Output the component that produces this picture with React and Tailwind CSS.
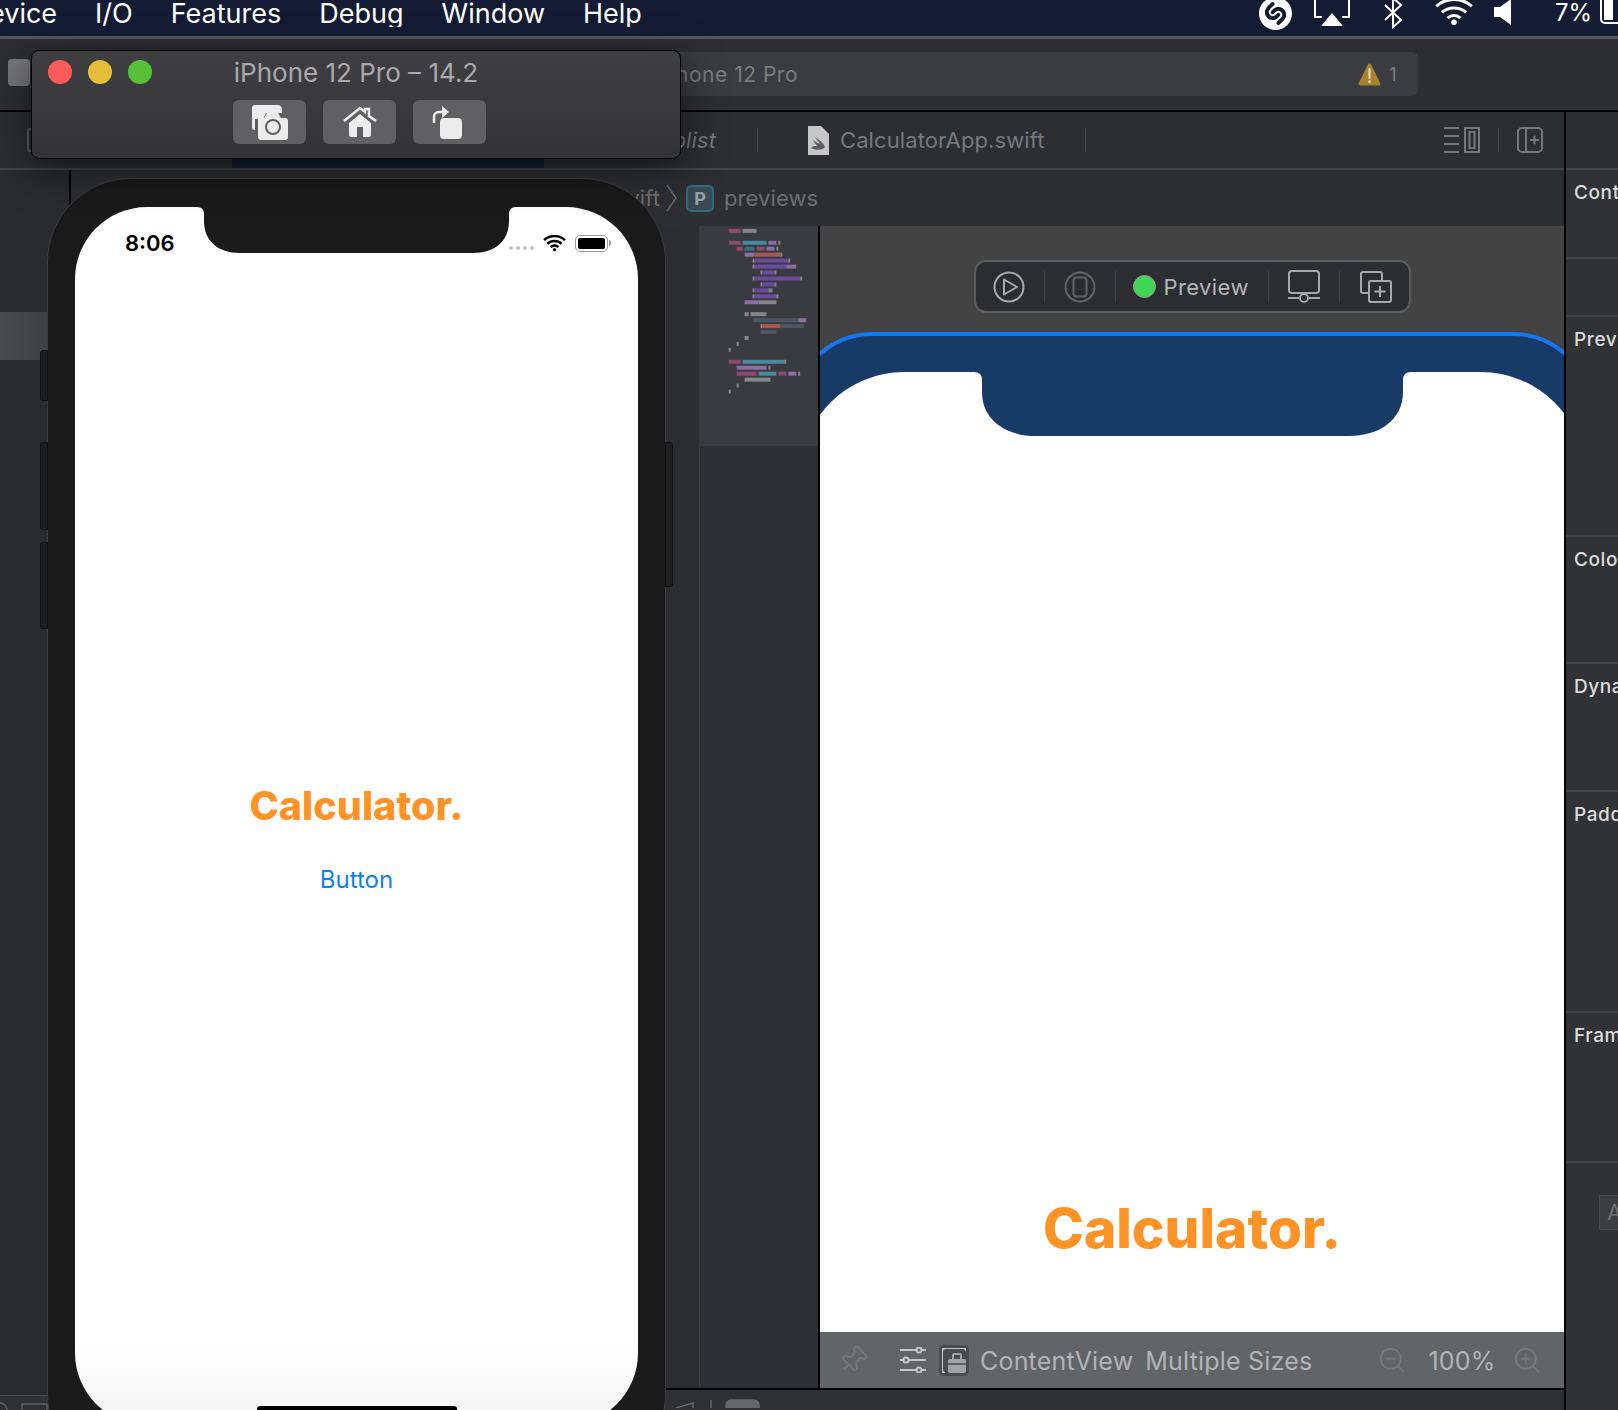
import { Pin, ZoomIn, ZoomOut } from 'lucide-react'
import { SiShazam } from 'react-icons/si'

const PINK = '#8c4a6e'
const GRAY = '#85858a'
const TEAL = '#4a8a9e'
const DTEAL = '#3f7080'
const LILAC = '#8a6ea6'
const PURPLE = '#6a4c9c'
const RED = '#a5584f'
const SLATE = '#4d5561'
const SAGE = '#7f8f8c'

// [y, x1, x2, colour] measured off the minimap
const minimapBars = [
  [60, 264, 300, PINK], [60, 306, 348, GRAY],
  [96, 264, 300, PINK], [96, 306, 378, TEAL], [96, 384, 408, LILAC], [96, 414, 420, GRAY],
  [114, 288, 306, PINK], [114, 312, 342, DTEAL], [114, 348, 372, PINK], [114, 378, 402, LILAC], [114, 408, 414, GRAY],
  [132, 312, 342, LILAC], [132, 342, 420, RED], [132, 420, 426, GRAY],
  [150, 336, 342, GRAY], [150, 342, 444, PURPLE], [150, 444, 450, GRAY],
  [168, 336, 342, GRAY], [168, 342, 438, PURPLE], [168, 438, 468, LILAC],
  [186, 360, 366, GRAY], [186, 366, 402, PURPLE], [186, 402, 408, GRAY],
  [204, 336, 342, GRAY], [204, 342, 480, PURPLE], [204, 480, 486, GRAY],
  [222, 360, 366, GRAY], [222, 366, 402, PURPLE], [222, 402, 408, GRAY],
  [240, 336, 342, GRAY], [240, 342, 384, PURPLE], [240, 384, 396, GRAY],
  [258, 336, 342, GRAY], [258, 342, 408, PURPLE], [258, 408, 414, GRAY],
  [276, 312, 354, LILAC], [276, 354, 408, GRAY],
  [312, 312, 324, GRAY], [312, 330, 378, GRAY],
  [330, 336, 474, SLATE], [330, 474, 498, LILAC],
  [348, 360, 366, GRAY], [348, 366, 420, RED], [348, 420, 492, SLATE],
  [366, 360, 408, SLATE],
  [384, 312, 324, GRAY],
  [402, 288, 294, GRAY],
  [420, 264, 270, GRAY],
  [456, 264, 300, PINK], [456, 306, 432, TEAL], [456, 432, 438, GRAY],
  [474, 288, 378, LILAC], [474, 384, 390, GRAY],
  [492, 288, 348, PINK], [492, 354, 408, TEAL], [492, 414, 438, PINK], [492, 444, 468, LILAC], [492, 474, 480, GRAY],
  [510, 312, 390, SAGE],
  [528, 288, 294, GRAY],
  [546, 264, 270, GRAY],
]

const inspectorSections = [
  { label: 'Cont', height: 'h-[89px]' },
  { label: '', height: 'h-[58px]' },
  { label: 'Prev', height: 'h-[220px]' },
  { label: 'Colo', height: 'h-[127px]' },
  { label: 'Dyna', height: 'h-[128px]' },
  { label: 'Padd', height: 'h-[221px]' },
  { label: 'Fram', height: 'h-[150px]' },
]

function WifiArcs({ className, weight = 3.2 }) {
  return (
    <svg viewBox="0 0 42 30" className={className} fill="none" stroke="currentColor" strokeWidth={weight}>
      <path d="M2 9C12-1 30-1 40 9" />
      <path d="M8 15.500C15 9 27 9 34 15.500" />
      <path d="M14 21.500C18 18 24 18 28 21.500" />
      <circle cx="21" cy="26" r="3" fill="currentColor" stroke="none" />
    </svg>
  )
}

function MenuBar() {
  return (
    <div className="h-[36px] shrink-0 bg-[#141c34] text-white flex items-start overflow-hidden">
      <div className="w-[1259px] shrink-0 overflow-hidden pt-[1px]">
        <div className="-ml-[11px] flex gap-[38px] text-[27px] leading-[26px]">
          <span>evice</span>
          <span>I/O</span>
          <span>Features</span>
          <span>Debug</span>
          <span>Window</span>
          <span>Help</span>
        </div>
      </div>
      <SiShazam className="-mt-[3px] w-[33px] h-[33px] shrink-0" />
      <svg viewBox="0 0 36 28" className="ml-[22px] w-[36px] h-[28px] shrink-0" fill="none" stroke="white" strokeWidth="2">
        <path d="M8 17H1V-2M28 17H35V-2" />
        <path d="M18 13L29 26H7Z" fill="white" stroke="none" />
      </svg>
      <svg viewBox="0 0 20 32" className="-mt-[3px] ml-[33px] w-[20px] h-[32px] shrink-0" fill="none" stroke="white" strokeWidth="2">
        <path d="M2 8L18 23L10 30V1L18 8L2 23" />
      </svg>
      <WifiArcs className="-mt-[2px] ml-[30px] w-[42px] h-[28px] shrink-0 text-white" />
      <svg viewBox="0 0 18 26" className="-mt-[1px] ml-[19px] w-[18px] h-[26px] shrink-0">
        <path d="M0 8H6L17 0V26L6 18H0Z" fill="white" />
      </svg>
      <span className="ml-[43px] mt-[1px] text-[24px] leading-[24px] shrink-0">7%</span>
      <div className="ml-[8px] w-[40px] h-[34px] -mt-[10px] shrink-0 rounded-[5px] border-2 border-white p-[2px]">
        <div className="w-[9px] h-full bg-white" />
      </div>
    </div>
  )
}

function Toolbar() {
  return (
    <div className="h-[76px] shrink-0 bg-[#2d2e32] border-t-[3px] border-t-[#58585a] border-b-2 border-b-black flex items-start pl-[8px] pt-[13px]">
      <div className="w-[22px] h-[27px] mt-[7px] rounded-[4px] bg-[#777779]" />
      <div className="ml-[10px] w-[1378px] h-[44px] rounded-[6px] bg-[#3b3c40] flex items-center text-[21px] tracking-[0.5px] text-[#7a7b7e]">
        <span className="ml-[612px] pt-[2px] w-[146px] text-right">iPhone 12 Pro</span>
        <svg viewBox="0 0 24 25" className="ml-[560px] w-[23px] h-[25px] shrink-0">
          <path d="M12 1C13 1 14 2 14.500 3.500L23 21C24 23 23 24 21 24H3C1 24 0 23 1 21L9.500 3.500C10 2 11 1 12 1Z" fill="#a8832d" />
          <path d="M12 7V16" stroke="#e2d6b8" strokeWidth="2.400" strokeLinecap="round" />
          <circle cx="12" cy="20" r="1.500" fill="#e2d6b8" />
        </svg>
        <span className="ml-[8px] pt-[2px] text-[19px]">1</span>
      </div>
    </div>
  )
}

function TabBar() {
  return (
    <div className="h-[56px] shrink-0 bg-[#2d2e32] flex items-center text-[#77787b] text-[22px] tracking-[0.1px]">
      <div className="w-[232px] pl-[27px] shrink-0">
        <div className="w-[12px] h-[24px] rounded-[3px] border-2 border-[#5a5b5e]" />
      </div>
      <div className="w-[312px] self-stretch shrink-0 bg-[#13202f]" />
      <span className="w-[172px] text-right italic shrink-0">plist</span>
      <div className="ml-[41px] w-[1px] h-[24px] bg-[#4c4d50] shrink-0" />
      <svg viewBox="0 0 22 29" className="ml-[49px] w-[22px] h-[29px] shrink-0">
        <path d="M1 0H14L22 8V29H1Z" fill="#c6c6c6" />
        <path d="M4 22C10 25 16 24 18 21C16 16 11 13 8 11C10 14 12 16 13 18C10 17 7 15 5 13C7 16 9 18 10 20C8 20 6 20 4 22Z" fill="#5e5e60" />
      </svg>
      <span className="ml-[11px] shrink-0">CalculatorApp.swift</span>
      <div className="ml-[40px] w-[1px] h-[24px] bg-[#4c4d50] shrink-0" />
      <svg viewBox="0 0 36 26" className="ml-[358px] w-[36px] h-[26px] shrink-0" fill="none" stroke="#77787b" strokeWidth="2">
        <path d="M0 1H15M0 9H15M0 17H15M0 25H15" />
        <rect x="21" y="1" width="14" height="24" />
        <rect x="25.500" y="5" width="5" height="16" />
      </svg>
      <div className="ml-[18px] w-[1px] h-[24px] bg-[#4c4d50] shrink-0" />
      <svg viewBox="0 0 26 26" className="ml-[18px] w-[26px] h-[26px] shrink-0" fill="none" stroke="#77787b" strokeWidth="2">
        <rect x="1" y="1" width="24" height="24" rx="4" />
        <path d="M9 1V25M13 13H22M17.500 8.500V17.500" />
      </svg>
    </div>
  )
}

function JumpBar() {
  return (
    <div className="h-[56px] shrink-0 bg-[#2d2e32] flex items-center text-[#6d6e71] text-[22px] tracking-[0.1px]">
      <div className="w-[71px] h-full shrink-0 bg-[#2a2b2f] border-r-2 border-black" />
      <div className="ml-[559px] w-[30px] shrink-0 flex justify-end overflow-hidden pt-[1px]">
        <span>wift</span>
      </div>
      <svg viewBox="0 0 12 28" className="ml-[6px] w-[12px] h-[28px] shrink-0" fill="none" stroke="#66676a" strokeWidth="1.500">
        <path d="M1 1L10 14L1 27" />
      </svg>
      <div className="ml-[8px] w-[28px] h-[27px] shrink-0 rounded-[5px] border-2 border-[#2d6a80] bg-[#3a4a54] flex items-center justify-center text-[#94a3aa] text-[18px] font-bold tracking-normal">P</div>
      <span className="ml-[10px] pt-[1px]">previews</span>
    </div>
  )
}

function Minimap() {
  return (
    <div className="w-[119px] shrink-0 bg-[#2e2f34] border-l border-[#3a3b3e]">
      <div className="h-[220px] bg-[#3a3b40]">
        <svg viewBox="177 48 357 660" className="w-full h-full">
          {minimapBars.map(([y, x1, x2, color]) => (
            <rect key={`${y}-${x1}`} x={x1} y={y - 6} width={x2 - x1} height="12" fill={color} />
          ))}
        </svg>
      </div>
    </div>
  )
}

function PreviewPill() {
  return (
    <div className="mt-[34px] h-[53px] w-[437px] shrink-0 rounded-[12px] border-2 border-[#5b5c5f] bg-[#2c2d31] flex items-center text-[#b5b5b7] text-[22px] tracking-[0.4px]">
      <svg viewBox="0 0 32 32" className="ml-[17px] w-[32px] h-[32px] shrink-0" fill="none" stroke="#a9a9ab" strokeWidth="2">
        <circle cx="16" cy="16" r="14.500" />
        <path d="M11 8.500L24 16L11 23.500Z" strokeLinejoin="round" />
      </svg>
      <div className="ml-[19px] w-[1px] h-[32px] bg-[#414246] shrink-0" />
      <svg viewBox="0 0 32 32" className="ml-[19px] w-[32px] h-[32px] shrink-0" fill="none" stroke="#636467" strokeWidth="2">
        <circle cx="16" cy="16" r="14.500" />
        <rect x="9.500" y="6.500" width="13" height="19" rx="3" />
      </svg>
      <div className="ml-[19px] w-[1px] h-[32px] bg-[#414246] shrink-0" />
      <div className="ml-[17px] w-[23px] h-[23px] shrink-0 rounded-full bg-[#3dd655] border border-[#9a9a9a]" />
      <span className="ml-[8px] pt-[1px] w-[83px] shrink-0">Preview</span>
      <div className="ml-[21px] w-[1px] h-[32px] bg-[#414246] shrink-0" />
      <svg viewBox="0 0 32 34" className="ml-[19px] w-[32px] h-[34px] shrink-0" fill="none" stroke="#a9a9ab" strokeWidth="2">
        <rect x="1" y="1" width="30" height="22" rx="3" />
        <path d="M0 28H11M21 28H32" />
        <circle cx="16" cy="28" r="4" />
      </svg>
      <div className="ml-[19px] w-[1px] h-[32px] bg-[#414246] shrink-0" />
      <svg viewBox="0 0 32 32" className="ml-[20px] w-[32px] h-[32px] shrink-0" fill="none" stroke="#a9a9ab" strokeWidth="2">
        <path d="M9 22H3C2 22 1 21 1 20V3C1 2 2 1 3 1H20C21 1 22 2 22 3V9" />
        <rect x="9" y="10" width="22" height="21" rx="2" />
        <path d="M20 15V26M14.500 20.500H25.500" />
      </svg>
    </div>
  )
}

function CanvasBottomBar() {
  return (
    <div className="h-[56px] w-full shrink-0 bg-[#636466] flex items-center text-[#b2b3b5] text-[25px] tracking-[0.2px]">
      <Pin className="ml-[18px] w-[30px] h-[30px] shrink-0 rotate-45 text-[#77787a]" strokeWidth={1.5} />
      <svg viewBox="0 0 26 26" className="ml-[32px] w-[26px] h-[26px] shrink-0" fill="none" stroke="#c6c6c8" strokeWidth="2">
        <path d="M0 3H26M0 13H26M0 23H26" />
        <circle cx="19" cy="3" r="2.500" fill="#636466" />
        <circle cx="6" cy="13" r="2.500" fill="#636466" />
        <circle cx="19" cy="23" r="2.500" fill="#636466" />
      </svg>
      <div className="ml-[13px] w-[30px] h-[31px] shrink-0 rounded-[5px] bg-[#4a4b4d] p-[3px]">
        <svg viewBox="0 0 24 25" className="w-full h-full" fill="none">
          <path d="M24 3C24 1 23 0 21 0H4C1 0 0 1 0 4V21C0 23 1 25 3 25" stroke="#c6c6c8" strokeWidth="2" />
          <rect x="6" y="11" width="18" height="14" rx="2" fill="#a2a3a5" />
          <rect x="11" y="6" width="8" height="6" rx="1" stroke="#a2a3a5" strokeWidth="2" />
          <path d="M6 16H24" stroke="#4a4b4d" strokeWidth="1.500" />
        </svg>
      </div>
      <span className="ml-[11px] pt-[3px] shrink-0">ContentView</span>
      <span className="ml-[12px] pt-[3px] shrink-0">Multiple Sizes</span>
      <ZoomOut className="ml-[65px] w-[30px] h-[30px] shrink-0 text-[#77787a]" strokeWidth={1.5} />
      <span className="ml-[21px] pt-[3px] shrink-0">100%</span>
      <ZoomIn className="ml-[16px] w-[30px] h-[30px] shrink-0 text-[#77787a]" strokeWidth={1.5} />
    </div>
  )
}

function PreviewCanvas() {
  return (
    <div className="w-[744px] shrink-0 flex flex-col items-center overflow-hidden bg-[#434343]">
      <PreviewPill />
      <div className="mt-[19px] w-[801px] flex-1 min-h-0 shrink-0 rounded-t-[80px] border-x-4 border-t-4 border-[#1477f2] bg-[#173a66] pt-[36px] px-[4px]">
        <div className="relative h-full rounded-t-[104px] bg-white flex flex-col items-center justify-end pb-[70px]">
          <svg viewBox="-8 0 437 64" className="absolute top-0 left-[174px] w-[437px] h-[64px]">
            <path d="M-8 0Q0 0 0 8V20C0 48 24 64 54 64H367C397 64 421 48 421 20V8Q421 0 429 0Z" fill="#173a66" />
          </svg>
          <span className="text-[55px] leading-[68px] font-extrabold text-[#ff9325]">Calculator.</span>
        </div>
      </div>
      <CanvasBottomBar />
    </div>
  )
}

function Inspector() {
  return (
    <div className="w-[52px] shrink-0 bg-[#313236] overflow-hidden">
      <div className="h-[56px] bg-[#2d2e32]" />
      {inspectorSections.map((section, i) => (
        <div key={i} className={`${section.height} border-t-2 border-[#434448] pl-[8px] pt-[11px] text-[19px] leading-[24px] font-medium tracking-[0.6px] text-[#dcdcdc] whitespace-nowrap`}>
          {section.label}
        </div>
      ))}
      <div className="border-t-2 border-[#434448] pl-[33px] pt-[32px]">
        <div className="w-[30px] h-[35px] bg-[#3d3e42] border border-[#4a4b4f] pl-[7px] text-[22px] leading-[33px] text-[#6e6f72]">A</div>
      </div>
    </div>
  )
}

function SimulatorWindow() {
  return (
    <div className="absolute left-[31px] top-[50px] w-[650px] h-[109px] rounded-[8px] border border-black bg-gradient-to-b from-[#3f3f41] to-[#333335] shadow-[0_10px_40px_rgba(0,0,0,0.55)]">
      <div className="absolute left-[16px] top-[9px] flex gap-[16px]">
        <div className="w-[24px] h-[24px] rounded-full bg-[#fc5b57]" />
        <div className="w-[24px] h-[24px] rounded-full bg-[#e5bf3c]" />
        <div className="w-[24px] h-[24px] rounded-full bg-[#57c038]" />
      </div>
      <div className="pt-[4px] flex flex-col items-center">
        <span className="text-[26px] leading-[36px] text-[#a9a9aa]">iPhone 12 Pro – 14.2</span>
        <div className="mt-[9px] ml-[7px] flex gap-[17px]">
          <button className="w-[73px] h-[44px] rounded-[6px] bg-[#606062] flex items-center justify-center">
            <svg viewBox="0 0 36 35" className="w-[36px] h-[35px]">
              <path d="M3 0H26C28 0 30 2 30 4V8H14L11 14H3V25C1 25 0 24 0 22V3C0 1 1 0 3 0Z" fill="#ececec" />
              <path d="M6 13H12L15 8H26L29 13H33C35 13 36 14 36 16V32C36 34 35 35 33 35H9C7 35 6 34 6 32Z" fill="#ececec" />
              <circle cx="21" cy="22" r="7" fill="#ececec" stroke="#606062" strokeWidth="2" />
            </svg>
          </button>
          <button className="w-[73px] h-[44px] rounded-[6px] bg-[#606062] flex items-center justify-center">
            <svg viewBox="0 0 34 30" className="w-[34px] h-[30px]">
              <path d="M1 14L17 1L22 5V2H26V9L33 14" fill="none" stroke="#ececec" strokeWidth="2.500" />
              <path d="M6 16L17 7L28 16V28C28 29 27 30 26 30H8C7 30 6 29 6 28Z" fill="#ececec" />
              <rect x="14" y="20" width="6" height="10" fill="#606062" />
            </svg>
          </button>
          <button className="w-[73px] h-[44px] rounded-[6px] bg-[#606062] flex items-center justify-center">
            <svg viewBox="0 0 30 33" className="mr-[5px] w-[30px] h-[33px]">
              <rect x="8" y="12" width="22" height="21" rx="4" fill="#ececec" />
              <path d="M2 17V11C2 8 4 6 7 6H11" fill="none" stroke="#ececec" strokeWidth="2.500" />
              <path d="M10 0L17 6L10 12Z" fill="#ececec" />
            </svg>
          </button>
        </div>
      </div>
    </div>
  )
}

function SimulatorPhone() {
  return (
    <div className="absolute left-[47px] top-[178px] w-[619px] h-[1300px] rounded-[84px] border border-[#3d3d40] bg-[#1a1a1a] px-[27px] pt-[28px]">
      {/* side buttons */}
      <div className="absolute left-[-8px] top-[171px] w-[8px] h-[51px] rounded-l-[3px] border border-[#111] bg-[#1f1f21]" />
      <div className="absolute left-[-8px] top-[263px] w-[8px] h-[88px] rounded-l-[3px] border border-[#111] bg-[#1f1f21]" />
      <div className="absolute left-[-8px] top-[363px] w-[8px] h-[87px] rounded-l-[3px] border border-[#111] bg-[#1f1f21]" />
      <div className="absolute right-[-8px] top-[263px] w-[8px] h-[145px] rounded-r-[3px] border border-[#111] bg-[#1f1f21]" />

      <div className="relative h-[1218px] rounded-[72px] bg-gradient-to-b from-white from-[93%] to-[#f4f4f4] flex flex-col items-center overflow-hidden">
        <svg viewBox="-7 0 319 46" className="absolute top-0 left-[122px] w-[319px] h-[46px]">
          <path d="M-7 0Q0 0 0 7V14C0 34 14 46 36 46H269C291 46 305 34 305 14V7Q305 0 312 0Z" fill="#1a1a1a" />
        </svg>
        <div className="mt-[24px] h-[24px] w-full flex items-center pl-[50px] pr-[27px]">
          <span className="text-[22px] font-semibold text-black">8:06</span>
          <div className="ml-auto mt-[10px] flex gap-[3px]">
            <div className="w-[4px] h-[4px] rounded-full bg-[#c4c4c4]" />
            <div className="w-[4px] h-[4px] rounded-full bg-[#c4c4c4]" />
            <div className="w-[4px] h-[4px] rounded-full bg-[#c4c4c4]" />
            <div className="w-[4px] h-[4px] rounded-full bg-[#c4c4c4]" />
          </div>
          <WifiArcs weight={4.6} className="ml-[9px] w-[23px] h-[17px] text-black" />
          <div className="ml-[9px] w-[33px] h-[17px] rounded-[5px] border border-[#999] p-[2px]">
            <div className="w-full h-full rounded-[2px] bg-black" />
          </div>
          <div className="ml-[1px] w-[2px] h-[6px] rounded-r bg-[#999]" />
        </div>
        <span className="mt-[527px] text-[39.500px] leading-[48px] font-extrabold text-[#ff9325]">Calculator.</span>
        <span className="mt-[35px] text-[24px] leading-[30px] text-[#0f7fff]">Button</span>
        <div className="absolute bottom-[9px] w-[200px] h-[10px] rounded-[3px] bg-black" />
      </div>
    </div>
  )
}

export default function App() {
  return (
    <div className="relative h-[1410px] w-[1618px] overflow-hidden bg-[#2d2e32] flex flex-col [font-family:Inter,sans-serif]">
      <MenuBar />
      <Toolbar />
      <div className="flex flex-1 min-h-0">
        <div className="w-[1564px] shrink-0 flex flex-col">
          <TabBar />
          <div className="h-[2px] shrink-0 bg-[#434448]" />
          <JumpBar />
          <div className="h-[1162px] shrink-0 flex">
            <div className="w-[73px] shrink-0 bg-[#2a2b2f] border-r-2 border-black pt-[86px]">
              <div className="h-[48px] bg-gradient-to-r from-[#4a4b4f] to-[#3a3b3f]" />
            </div>
            <div className="flex-1 bg-gradient-to-r from-[#25262a] to-[#2c2d31]" />
            <Minimap />
            <div className="w-[2px] shrink-0 bg-black" />
            <PreviewCanvas />
          </div>
          <div className="h-[22px] shrink-0 flex">
            <div className="w-[60px] shrink-0 bg-[#2a2b2f]">
              <div className="mt-[7px] h-[15px] bg-[#2f3034] border-t border-[#4a4b4f]">
                <svg viewBox="0 0 50 14" className="w-[50px] h-[14px]" fill="none" stroke="#5e5f62" strokeWidth="1.500">
                  <circle cx="0" cy="14" r="7" />
                  <rect x="22" y="8" width="25" height="12" />
                </svg>
              </div>
            </div>
            <div className="flex-1 bg-[#2f3034] border-t-2 border-black">
              <svg viewBox="0 0 120 18" className="ml-[590px] w-[120px] h-[18px]" fill="none" stroke="#66676a" strokeWidth="1.500">
                <path d="M26 18L43 13V20" />
                <path d="M61 10V18" />
                <rect x="76" y="10" width="33" height="30" rx="5" fill="#66676a" />
              </svg>
            </div>
          </div>
        </div>
        <div className="w-[2px] shrink-0 bg-black" />
        <Inspector />
      </div>
      <SimulatorPhone />
      <SimulatorWindow />
    </div>
  )
}
